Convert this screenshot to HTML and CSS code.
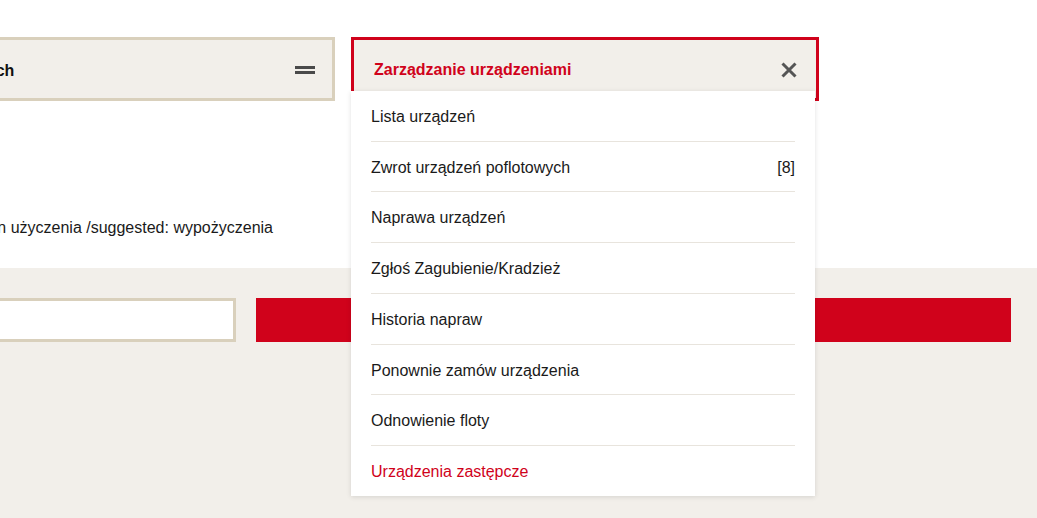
FILE: index.html
```html
<!DOCTYPE html>
<html lang="pl">
<head>
<meta charset="utf-8">
<title>Zarządzanie urządzeniami</title>
<link rel="stylesheet" href="styles.css">
</head>
<body>
  <div class="top">
    <nav class="nav">
      <div class="nav-box">
        <span class="nav-title">Search</span>
        <span class="burger"><span></span><span></span></span>
      </div>
      <div class="nav-box nav-box--active">
        <span class="nav-title nav-title--red">Zarządzanie urządzeniami</span>
        <svg class="close" width="16" height="16" viewBox="0 0 16 16" aria-hidden="true">
          <path d="M1.5 1.5 L14.5 14.5 M14.5 1.5 L1.5 14.5" stroke="#555" stroke-width="3" fill="none"/>
        </svg>
        <ul class="dropdown">
          <li class="dd-item">Lista urządzeń</li>
          <li class="dd-item"><span>Zwrot urządzeń poflotowych</span><span>[8]</span></li>
          <li class="dd-item">Naprawa urządzeń</li>
          <li class="dd-item">Zgłoś Zagubienie/Kradzież</li>
          <li class="dd-item">Historia napraw</li>
          <li class="dd-item">Ponownie zamów urządzenia</li>
          <li class="dd-item">Odnowienie floty</li>
          <li class="dd-item dd-item--red">Urządzenia zastępcze</li>
        </ul>
      </div>
    </nav>
    <p class="note"><span>Termin użyczenia /suggested: wypożyczenia</span></p>
  </div>
  <div class="band">
    <div class="form-row">
      <div class="field"></div>
      <div class="button"></div>
    </div>
  </div>
</body>
</html>
```

FILE: styles.css
```css
* { box-sizing: border-box; }

html, body {
  margin: 0;
  padding: 0;
}

body {
  font-family: "Liberation Sans", Arial, sans-serif;
  font-size: 16px;
  color: #1a1a1a;
  background: #f2efea;
  overflow: hidden;
  height: 518px;
}

.top {
  background: #ffffff;
  height: 268px;
  padding-top: 37px;
}

.nav {
  display: flex;
  gap: 16px;
  margin-left: -62px;
}

.nav-box {
  width: 397px;
  height: 64px;
  border: 3px solid #d9d0bc;
  background: #f2efea;
  display: flex;
  align-items: center;
  justify-content: space-between;
  padding: 1px 17px 0 20px;
}

.nav-box--active {
  position: relative;
  width: 468px;
  border-color: #d0021b;
  padding: 0 19px 0 20px;
}

.nav-title {
  font-weight: bold;
  font-size: 16px;
  color: #111;
  padding-top: 2px;
}

.nav-title--red {
  color: #d0021b;
}

.burger {
  display: flex;
  flex-direction: column;
  gap: 2px;
  width: 20px;
}

.burger span {
  display: block;
  height: 3px;
  background: #4a4a4a;
}

.close {
  display: block;
  margin-top: 1px;
}

.dropdown {
  position: absolute;
  top: 51px;
  left: -3px;
  width: 464px;
  margin: 0;
  padding: 0 20px;
  list-style: none;
  background: #ffffff;
  box-shadow: 0 1px 5px rgba(0, 0, 0, 0.12);
  z-index: 2;
}

.dd-item {
  display: flex;
  justify-content: space-between;
  padding: 17px 0 15px;
  line-height: 17.7px;
  border-bottom: 1px solid #e8e4dd;
  color: #1a1a1a;
}

.dd-item--red {
  color: #d0021b;
  border-bottom: none;
  padding-bottom: 15px;
}

.note {
  margin: 118px 0 0 0;
  width: 273px;
  display: flex;
  justify-content: flex-end;
  white-space: nowrap;
  line-height: 18px;
}

.band {
  padding-top: 30px;
}

.form-row {
  display: flex;
  gap: 20px;
  margin-left: -64px;
}

.field {
  width: 300px;
  height: 44px;
  background: #ffffff;
  border: 3px solid #d9d0bc;
}

.button {
  width: 755px;
  height: 44px;
  background: #d0021b;
}
```
